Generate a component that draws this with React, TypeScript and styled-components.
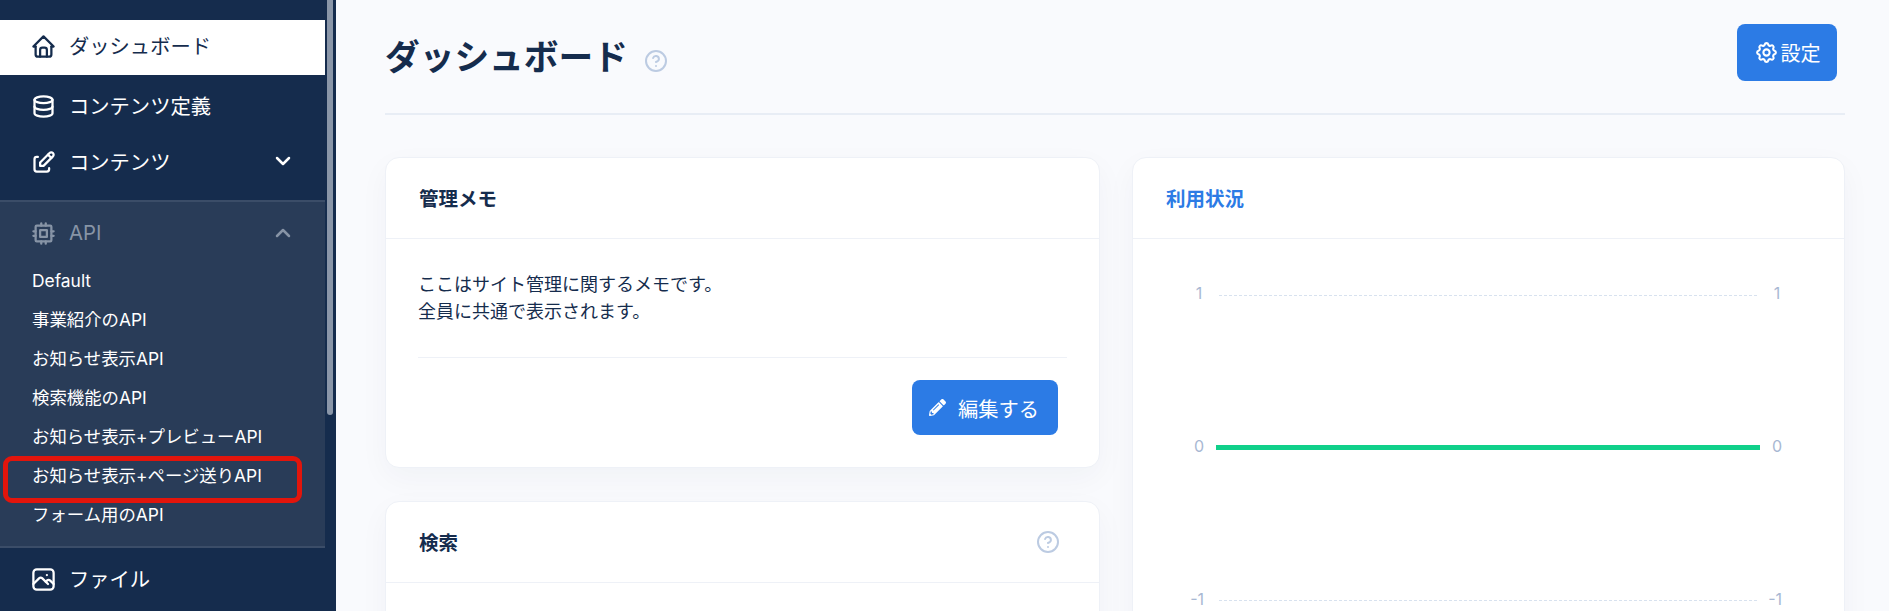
import styled, { createGlobalStyle } from 'styled-components'
import {
  TbHome,
  TbDatabase,
  TbEdit,
  TbCpu,
  TbPhoto,
  TbChevronDown,
  TbChevronUp,
  TbSettings
} from 'react-icons/tb'
import { FaPencilAlt } from 'react-icons/fa'
import { CircleHelp } from 'lucide-react'

const apiNames = [
  'Default',
  '事業紹介のAPI',
  'お知らせ表示API',
  '検索機能のAPI',
  'お知らせ表示+プレビューAPI',
  'お知らせ表示+ページ送りAPI',
  'フォーム用のAPI'
]

const App = () => {
  return (
    <Page>
      <GlobalStyle />
      <Sidebar>
        <Nav>
          <ActiveItem>
            <TbHome size={27} />
            <span>ダッシュボード</span>
          </ActiveItem>
          <MenuItem>
            <TbDatabase size={27} />
            <span>コンテンツ定義</span>
          </MenuItem>
          <MenuItem>
            <TbEdit size={27} />
            <span>コンテンツ</span>
            <Chevron><TbChevronDown size={24} strokeWidth={2.5} /></Chevron>
          </MenuItem>
          <ApiSection>
            <ApiHead>
              <TbCpu size={27} />
              <span>API</span>
              <Chevron><TbChevronUp size={24} strokeWidth={2.5} /></Chevron>
            </ApiHead>
            <ApiList>
              {apiNames.map((name, i) => (
                <ApiLink key={i} $marked={i === 5}>{name}</ApiLink>
              ))}
            </ApiList>
          </ApiSection>
          <FileItem>
            <TbPhoto size={27} />
            <span>ファイル</span>
          </FileItem>
        </Nav>
        <ScrollThumb />
      </Sidebar>

      <Main>
        <Header>
          <TitleWrap>
            <h1>ダッシュボード</h1>
            <TitleHelp><CircleHelp size={24} /></TitleHelp>
          </TitleWrap>
          <SettingsButton>
            <TbSettings size={25} />
            <span>設定</span>
          </SettingsButton>
        </Header>

        <Columns>
          <Column>
            <Card>
              <CardHead>
                <h2>管理メモ</h2>
              </CardHead>
              <MemoBody>
                <p>ここはサイト管理に関するメモです。<br />全員に共通で表示されます。</p>
              </MemoBody>
              <MemoFoot>
                <EditButton>
                  <FaPencilAlt size={17} />
                  <span>編集する</span>
                </EditButton>
              </MemoFoot>
            </Card>
            <SearchCard>
              <CardHead>
                <h2>検索</h2>
                <HelpIcon><CircleHelp size={24} /></HelpIcon>
              </CardHead>
            </SearchCard>
          </Column>

          <Card>
            <CardHead>
              <BlueTitle>利用状況</BlueTitle>
            </CardHead>
            <UsageChart />
          </Card>
        </Columns>
      </Main>
    </Page>
  )
}

const UsageChart = () => (
  <ChartSvg viewBox='0 0 711 420' width='711' height='420'>
    <line x1='86' x2='624' y1='56.5' y2='56.5' stroke='#d8e2ef' strokeDasharray='3 2' />
    <line x1='86' x2='624' y1='361.5' y2='361.5' stroke='#d8e2ef' strokeDasharray='3 2' />
    <line x1='83' x2='627' y1='208.5' y2='208.5' stroke='#10d08a' strokeWidth='5' />
    <ChartLabel x='66' y='60' textAnchor='middle'>1</ChartLabel>
    <ChartLabel x='644' y='60' textAnchor='middle'>1</ChartLabel>
    <ChartLabel x='66' y='213' textAnchor='middle'>0</ChartLabel>
    <ChartLabel x='644' y='213' textAnchor='middle'>0</ChartLabel>
    <ChartLabel x='71' y='366' textAnchor='end'>-1</ChartLabel>
    <ChartLabel x='649' y='366' textAnchor='end'>-1</ChartLabel>
  </ChartSvg>
)

const GlobalStyle = createGlobalStyle`
  html, body {
    margin: 0;
    height: 100%;
    overflow: hidden;
  }
  body {
    font-family: Inter, "Noto Sans CJK JP", sans-serif;
    background: #f9fafd;
    color: #152c4d;
  }
  h1, h2, p {
    margin: 0;
  }
`

const Page = styled.div`
  display: flex;
  height: 611px;
  overflow: hidden;
`

const Sidebar = styled.aside`
  flex: 0 0 336px;
  display: flex;
  background: #152c4d;
  color: #fff;
  height: 611px;
  overflow: hidden;
`

const Nav = styled.nav`
  flex: 0 0 325px;
  padding-top: 20px;
`

const ScrollThumb = styled.div`
  flex: 0 0 6px;
  height: 415px;
  margin-left: 2px;
  background: #8a96a8;
  border-radius: 0 0 3px 3px;
`

const MenuItem = styled.div`
  display: flex;
  align-items: center;
  gap: 12px;
  height: 56px;
  padding: 0 30px;
  font-size: 20.3px;
  svg {
    flex: none;
  }
  span {
    margin-top: -2px;
  }
`

const ActiveItem = styled(MenuItem)`
  height: 55px;
  padding-bottom: 3px;
  box-sizing: border-box;
  margin-bottom: 3px;
  background: #fff;
  color: #152c4d;
`

const FileItem = styled(MenuItem)`
  margin-top: 3px;
`

const Chevron = styled.span`
  display: flex;
  margin-left: auto;
`

const ApiSection = styled.div`
  margin-top: 10px;
  height: 348px;
  background: #293c58;
  border-top: 2px solid #3b4d68;
  border-bottom: 2px solid #3b4d68;
  box-sizing: border-box;
`

const ApiHead = styled(MenuItem)`
  color: #8794a6;
  height: 60px;
  padding-top: 3px;
  box-sizing: border-box;
`

const ApiList = styled.div`
  display: flex;
  flex-direction: column;
  margin-top: -1px;
`

const ApiLink = styled.div<{ $marked?: boolean }>`
  position: relative;
  height: 39px;
  line-height: 39px;
  padding-left: 32px;
  font-size: 17.4px;
  white-space: nowrap;

  ${({ $marked }) =>
    $marked &&
    `
    &::after {
      content: '';
      position: absolute;
      left: 3px;
      top: 0;
      width: 299px;
      height: 47px;
      box-sizing: border-box;
      border: 5px solid #e2150c;
      border-radius: 9px;
    }
  `}
`

const Main = styled.main`
  flex: 1;
  min-width: 0;
  padding: 0 44px 0 49px;
`

const Header = styled.header`
  display: flex;
  align-items: flex-start;
  justify-content: space-between;
  height: 113px;
  border-bottom: 2px solid #e8edf5;
  margin-bottom: 42px;
`

const TitleWrap = styled.div`
  display: flex;
  align-items: center;
  gap: 16px;
  padding-top: 30px;

  h1 {
    font-size: 34.7px;
    line-height: 54px;
    font-weight: 700;
  }
`

const HelpIcon = styled.span`
  display: flex;
  margin-left: auto;
  color: #bccbe2;
  margin-top: 2px;
`

const TitleHelp = styled(HelpIcon)`
  margin-top: 8px;
`

const SettingsButton = styled.button`
  display: flex;
  align-items: center;
  justify-content: center;
  gap: 2px;
  width: 100px;
  height: 57px;
  margin: 24px 8px 0 0;
  border: 0;
  border-radius: 8px;
  background: #2c7be5;
  color: #fff;
  font: inherit;
  font-size: 20px;
`

const Columns = styled.div`
  display: grid;
  grid-template-columns: 715px 713px;
  gap: 32px;
  align-items: start;
`

const Column = styled.div`
  display: flex;
  flex-direction: column;
  gap: 33px;
`

const Card = styled.section`
  background: #fff;
  border: 1px solid #eef1f7;
  border-radius: 14px;
  box-shadow: 0 10px 30px rgba(21, 44, 77, 0.04);
  overflow: hidden;
`

const SearchCard = styled(Card)`
  min-height: 200px;
`

const CardHead = styled.div`
  display: flex;
  align-items: center;
  height: 81px;
  padding: 0 39px 2px 33px;
  box-sizing: border-box;
  border-bottom: 1px solid #eef1f7;

  h2 {
    font-size: 19.5px;
    font-weight: 700;
  }
`

const BlueTitle = styled.h2`
  color: #2c7be5;
`

const MemoBody = styled.div`
  margin: 0 32px;
  padding: 32px 0 32px;
  border-bottom: 1px solid #eef1f7;
  font-size: 18px;
  line-height: 27px;
`

const MemoFoot = styled.div`
  display: flex;
  justify-content: flex-end;
  padding: 22px 41px 32px;
`

const EditButton = styled.button`
  display: flex;
  align-items: center;
  gap: 12px;
  width: 146px;
  height: 55px;
  padding: 0 0 0 17px;
  border: 0;
  border-radius: 8px;
  background: #2c7be5;
  color: #fff;
  font: inherit;
  font-size: 20.3px;
`

const ChartSvg = styled.svg`
  display: block;
`

const ChartLabel = styled.text`
  fill: #a8b8d3;
  font-size: 16px;
`

export default App
